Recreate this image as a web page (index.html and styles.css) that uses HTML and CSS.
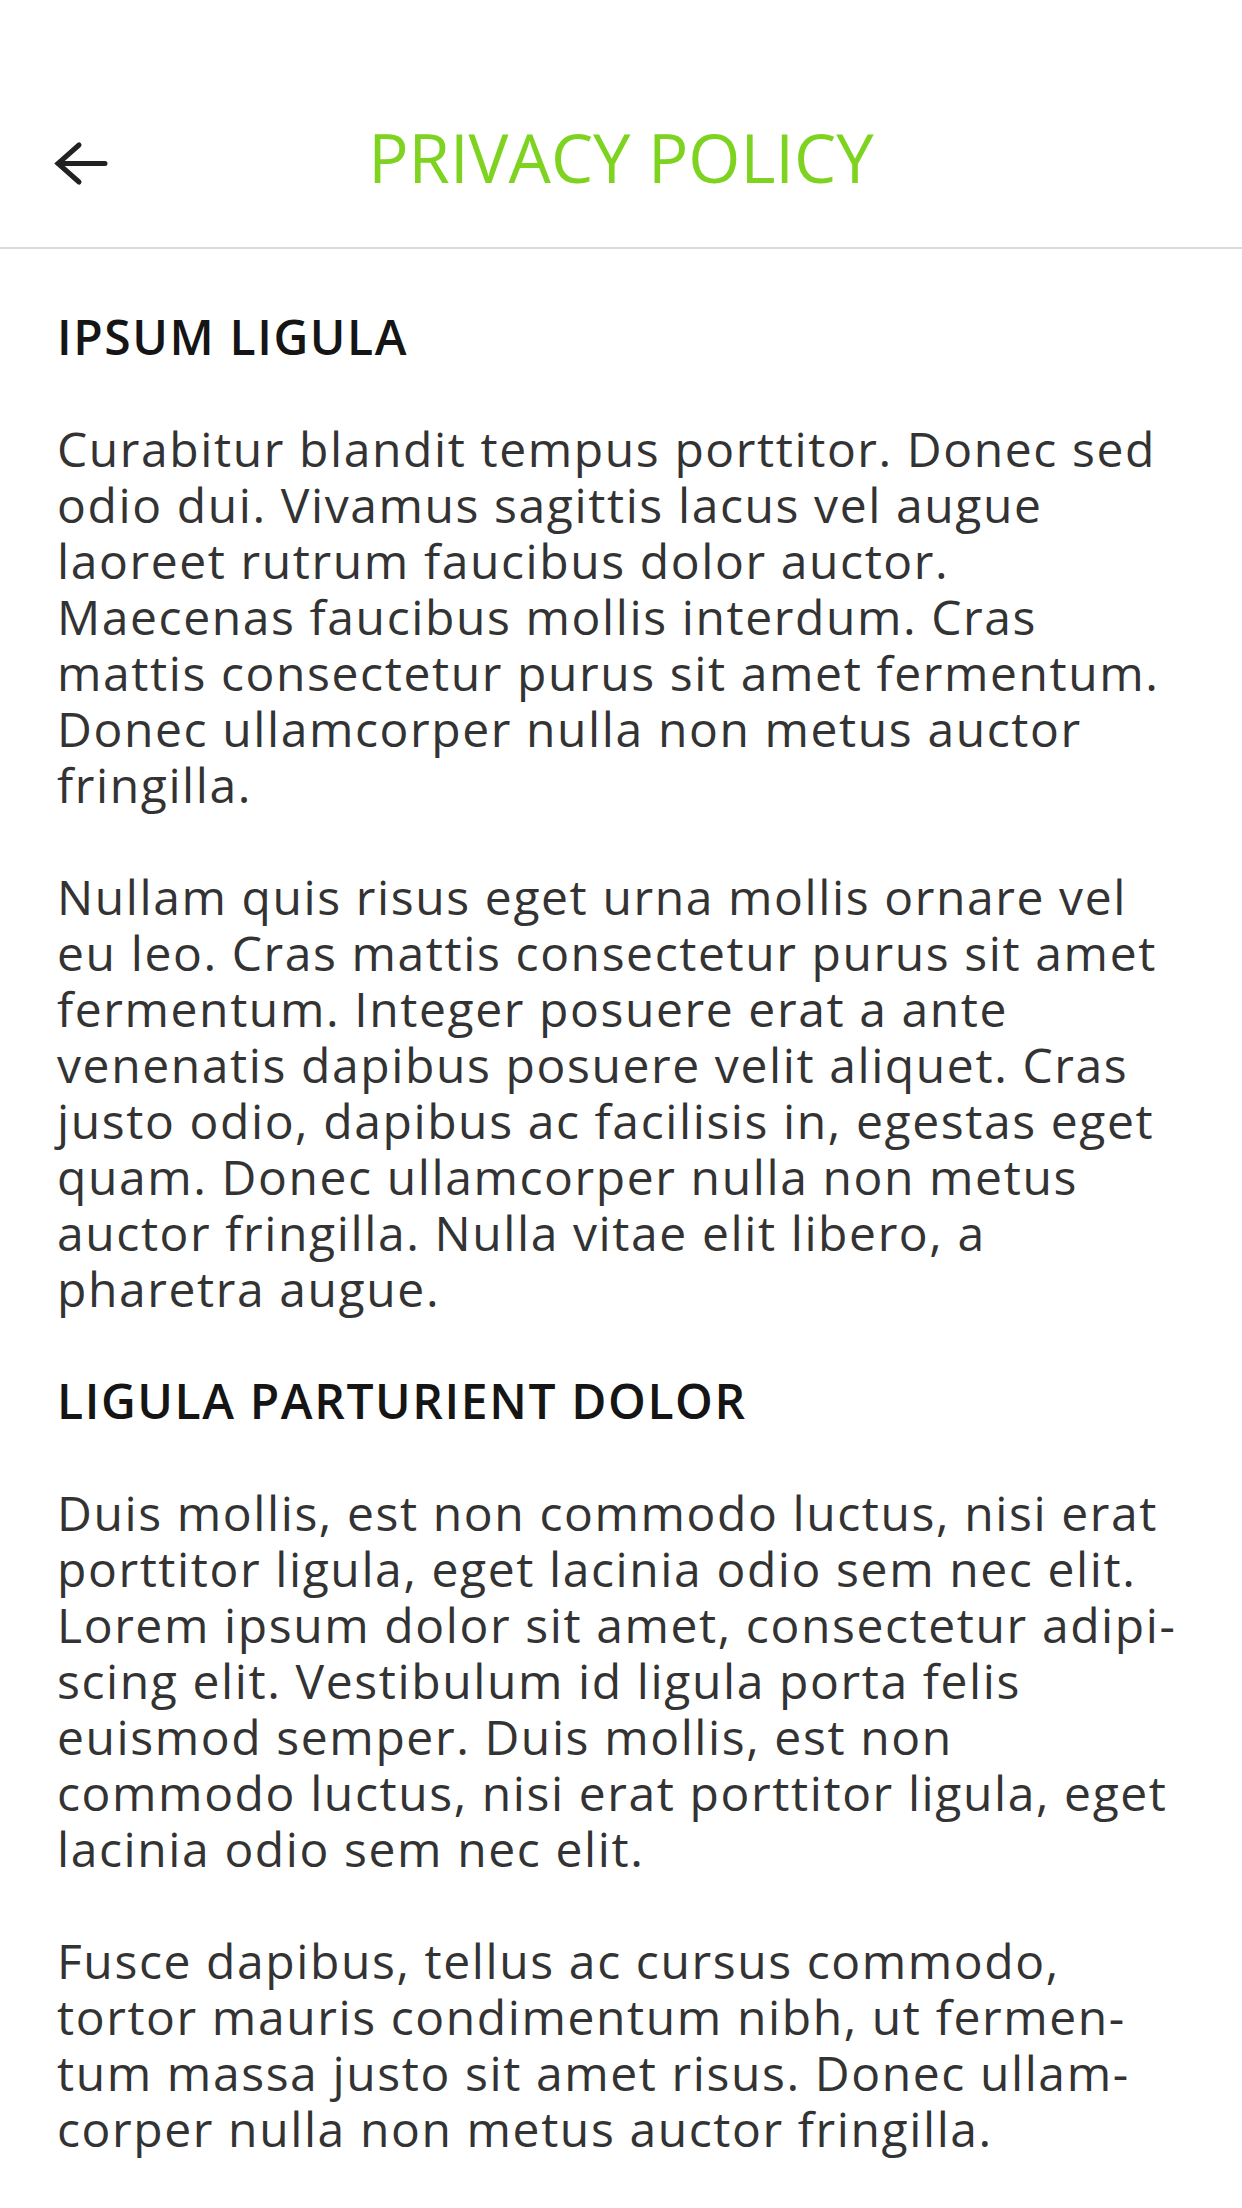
FILE: index.html
```html
<!DOCTYPE html>
<html lang="en">
<head>
<meta charset="utf-8">
<title>Privacy Policy</title>
<link rel="stylesheet" href="styles.css">
</head>
<body>
<header class="topbar">
  <button class="back" aria-label="Back">
    <svg width="54" height="48" viewBox="0 0 54 48"><path d="M25 5 L4 23.5 L25 42 M4 23.5 H51" fill="none" stroke="#222" stroke-width="5" stroke-linecap="round" stroke-linejoin="miter"/></svg>
  </button>
  <h1 class="title">PRIVACY POLICY</h1>
  <div></div>
</header>
<main class="content">
  <h2 class="heading">IPSUM LIGULA</h2>
  <p class="para">Curabitur blandit tempus porttitor. Donec sed odio dui. Vivamus sagittis lacus vel augue laoreet rutrum faucibus dolor auctor. Maecenas faucibus mollis interdum. Cras mattis consectetur purus sit amet fermentum. Donec ullamcorper nulla non metus auctor fringilla.</p>
  <p class="para">Nullam quis risus eget urna mollis ornare vel eu leo. Cras mattis consectetur purus sit amet fermentum. Integer posuere erat a ante venenatis dapibus posuere velit aliquet. Cras justo odio, dapibus ac facilisis in, egestas eget quam. Donec ullamcorper nulla non metus auctor fringilla. Nulla vitae elit libero, a pharetra augue.</p>
  <h2 class="heading">LIGULA PARTURIENT DOLOR</h2>
  <p class="para">Duis mollis, est non commodo luctus, nisi erat porttitor ligula, eget lacinia odio sem nec elit. Lorem ipsum dolor sit amet, consectetur adipi&shy;scing elit. Vestibulum id ligula porta felis euismod semper. Duis mollis, est non commodo luctus, nisi erat porttitor ligula, eget lacinia odio sem nec elit.</p>
  <p class="para">Fusce dapibus, tellus ac cursus commodo, tortor mauris condimentum nibh, ut fermen&shy;tum massa justo sit amet risus. Donec ullam&shy;corper nulla non metus auctor fringilla.</p>
</main>
</body>
</html>
```
FILE: styles.css
```css
html, body {
  margin: 0;
  padding: 0;
  background: #ffffff;
}
body {
  font-family: "Open Sans", "Liberation Sans", sans-serif;
  width: 1242px;
}
.topbar {
  box-sizing: border-box;
  height: 249px;
  padding-top: 117px;
  border-bottom: 2px solid #dcdcdc;
  display: grid;
  grid-template-columns: 1fr auto 1fr;
  align-items: start;
}
.back {
  justify-self: start;
  margin: 23px 0 0 54px;
  padding: 0;
  border: 0;
  background: none;
  width: 54px;
  height: 48px;
  display: block;
}
.back svg {
  display: block;
}
.title {
  margin: 0;
  font-size: 67px;
  line-height: 80px;
  font-weight: 400;
  color: #7ed321;
  letter-spacing: 0;
}
.content {
  padding: 60px 57px 40px 57px;
}
.heading {
  margin: 0 0 56px;
  font-size: 48px;
  line-height: 56px;
  font-weight: 600;
  letter-spacing: 1.6px;
  color: #151515;
}
.para {
  margin: 0 0 56px;
  font-size: 48px;
  line-height: 56px;
  font-weight: 400;
  letter-spacing: 1.6px;
  color: #333333;
}
```
